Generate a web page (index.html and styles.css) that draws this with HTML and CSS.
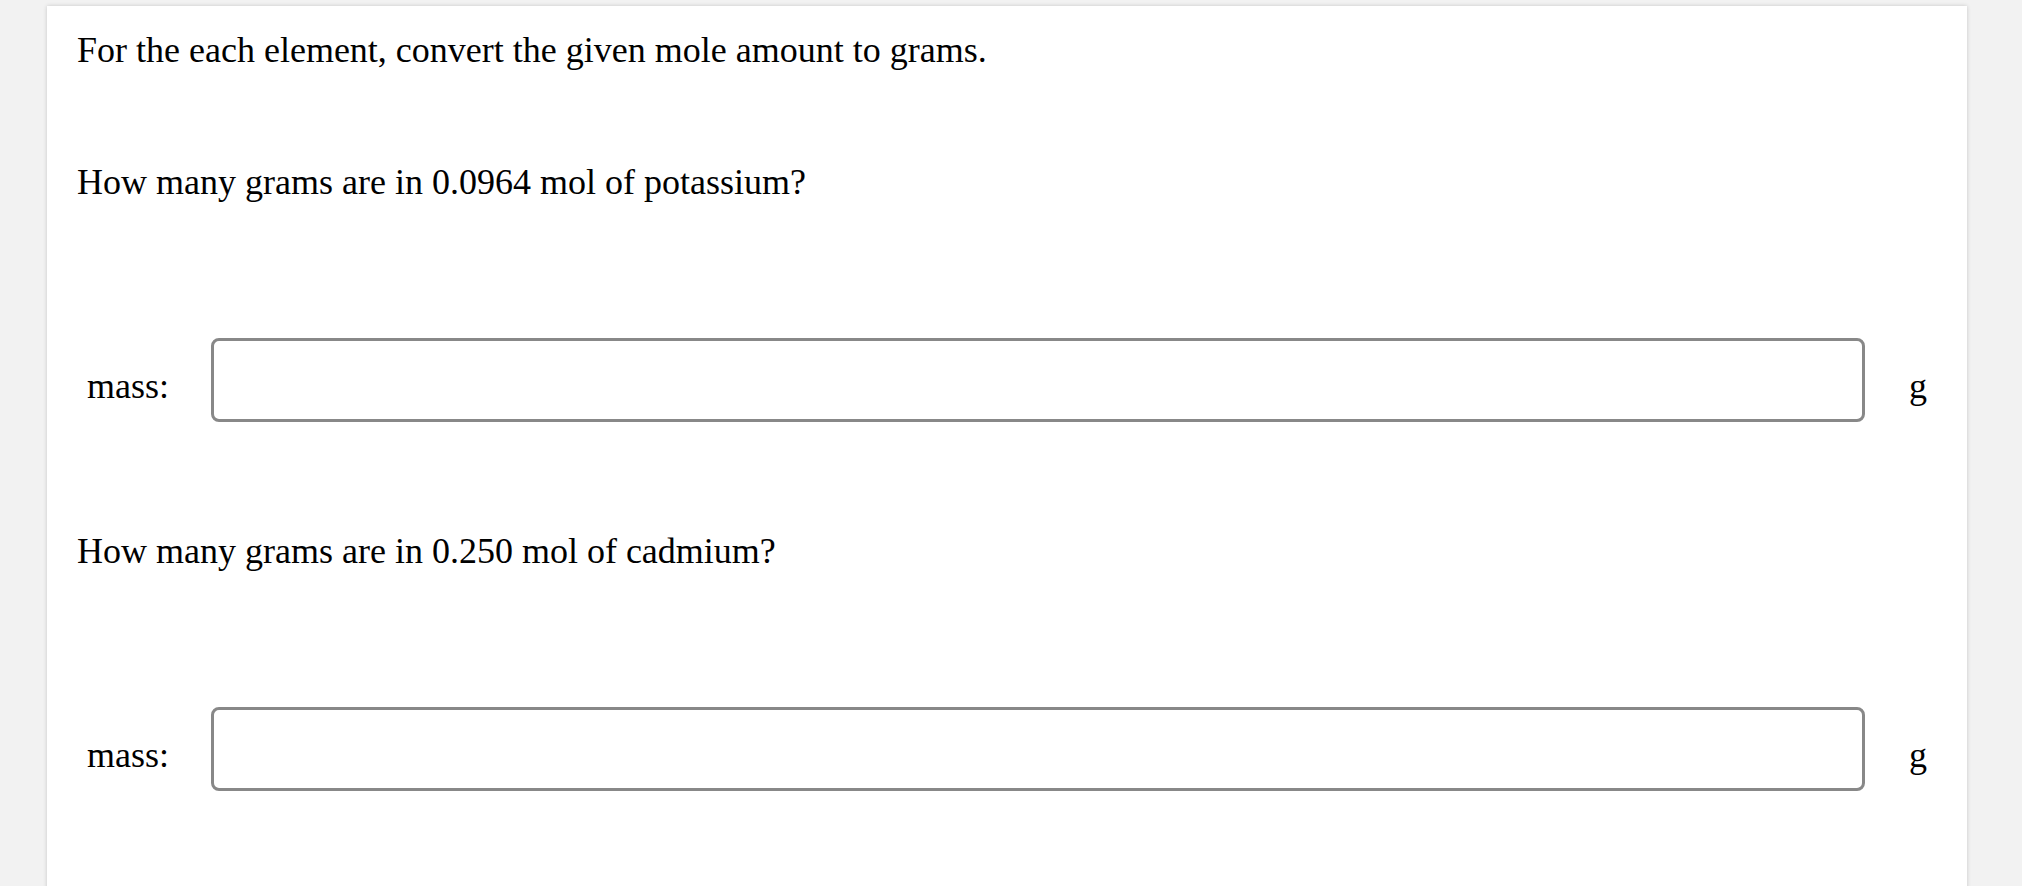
FILE: index.html
```html
<!DOCTYPE html>
<html lang="en">
<head>
  <meta charset="UTF-8">
  <title>Mole to Grams</title>
  <link rel="stylesheet" href="styles.css">
</head>
<body>

  <div class="card">
    <p class="intro">For the each element, convert the given mole amount to grams.</p>

    <p class="question">How many grams are in 0.0964 mol of potassium?</p>
    <div class="answer-row">
      <label class="answer-label" for="massK">mass:</label>
      <input type="text" id="massK" class="answer-input">
      <span class="unit">g</span>
    </div>

    <p class="question">How many grams are in 0.250 mol of cadmium?</p>
    <div class="answer-row">
      <label class="answer-label" for="massCd">mass:</label>
      <input type="text" id="massCd" class="answer-input">
      <span class="unit">g</span>
    </div>
  </div>

</body>
</html>
```

FILE: styles.css
```css
html, body {
  margin: 0;
  padding: 0;
  background-color: #f2f2f2;
  overflow: hidden;
}
body {
  font-family: "Liberation Serif", "Times New Roman", serif;
  font-size: 36px;
  color: #000;
  padding: 6px 0 0 47px;
}
.card {
  width: 1920px;
  min-height: 1000px;
  box-sizing: border-box;
  padding: 23px 31px 23px 30px;
  background-color: #fff;
  box-shadow: 0 0 4px rgba(0,0,0,0.18);
}
.intro {
  margin: 0 0 90px;
}
.question {
  margin: 0 0 135px;
}
.answer-row {
  display: flex;
  align-items: center;
  padding: 0 9px 0 10px;
  margin-bottom: 108px;
}
.answer-label {
  width: 124px;
  flex: none;
  padding-top: 12px;
}
.answer-input {
  flex: 1;
  height: 84px;
  box-sizing: border-box;
  border: 3px solid #888;
  border-radius: 8px;
  background-color: #fff;
  font-family: inherit;
  font-size: 36px;
  padding: 0 12px;
  outline: none;
}
.unit {
  margin-left: 44px;
  padding-top: 12px;
  flex: none;
}
```
